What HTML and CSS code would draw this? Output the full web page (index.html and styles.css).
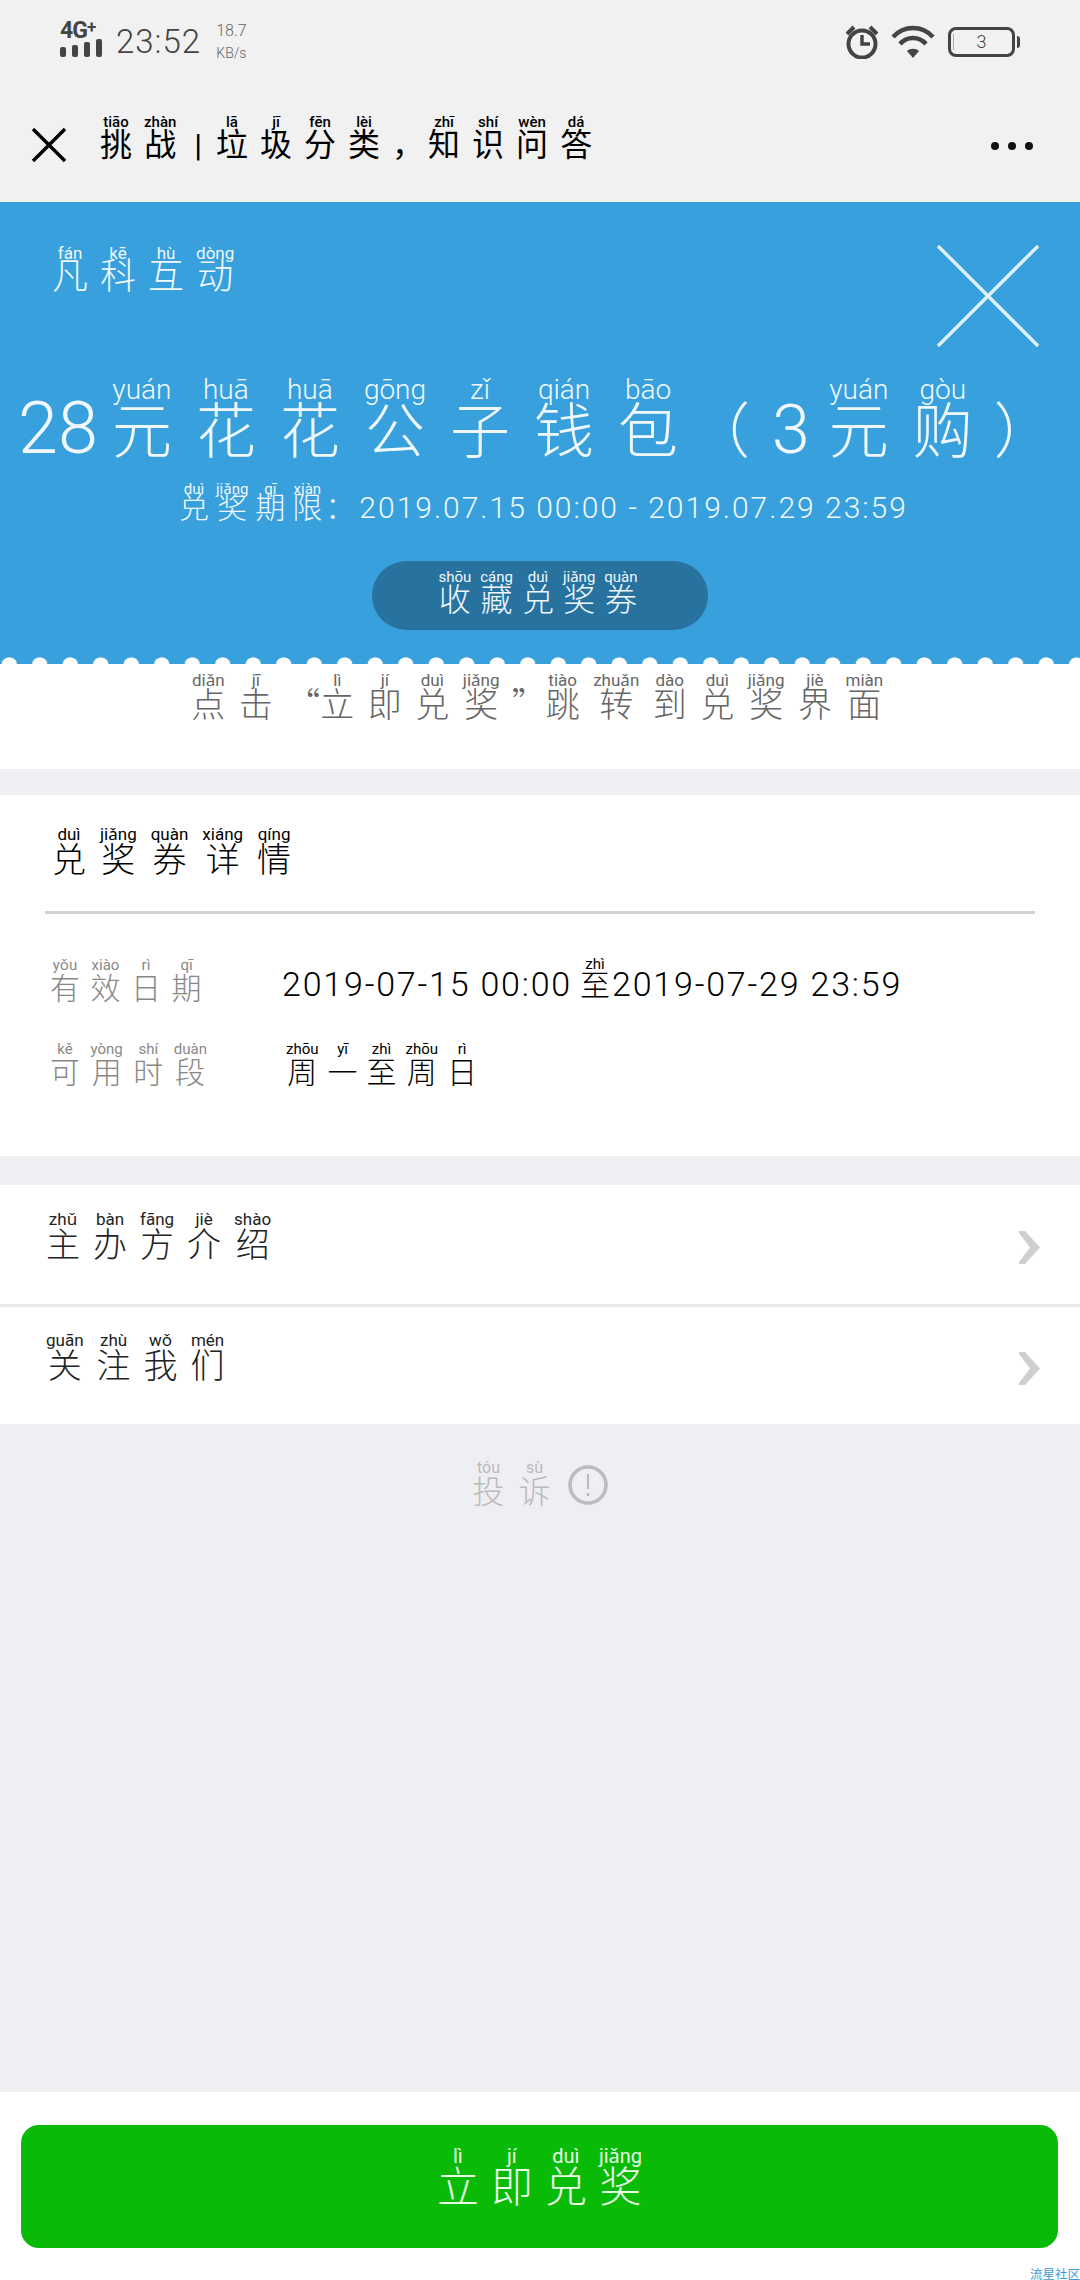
FILE: index.html
```html
<!DOCTYPE html>
<html lang="zh-CN">
<head>
<meta charset="utf-8">
<title>兑奖券</title>
<link rel="stylesheet" href="styles.css">
</head>
<body>
<div class="page">
  <header class="top">
    <div class="status">
      <div class="status-left">
        <div class="net"><span class="net-label">4G<sup>+</sup></span>
          <svg class="signal" width="42" height="18" viewBox="0 0 42 18"><rect x="0" y="8" width="6" height="10" rx="2"/><rect x="12" y="6" width="6" height="12" rx="2"/><rect x="24" y="3" width="6" height="15" rx="2"/><rect x="36" y="0" width="6" height="18" rx="2"/></svg>
        </div>
        <span class="time">23:52</span>
        <div class="speed"><span>18.7</span><span class="speed-unit">KB/s</span></div>
      </div>
      <div class="status-right">
        <svg class="alarm" width="34" height="34" viewBox="0 0 34 34" fill="none" stroke="#444"><circle cx="17" cy="19" r="13.5" stroke-width="4"/><path d="M17 10v9h8" stroke-width="3.5"/><path d="M2 9 9 2M32 9 25 2" stroke-width="4"/></svg>
        <svg class="wifi" width="44" height="33" viewBox="0 0 44 33" fill="none" stroke="#444" stroke-width="4.5"><path d="M2 12C13 0 31 0 42 12"/><path d="M9 19C16 11 28 11 35 19"/><path d="M16 26 22 33 28 26C25 23 19 23 16 26Z" fill="#444" stroke="none"/></svg>
        <div class="battery"><span class="battery-low"></span><span class="battery-num">3</span></div>
        <span class="battery-nub"></span>
      </div>
    </div>
    <nav class="nav">
      <svg class="nav-close" width="36" height="36" viewBox="0 0 36 36" stroke="#000" stroke-width="3.4" fill="none"><path d="M2 2 34 34M34 2 2 34"/></svg>
      <div class="nav-title zh"><ruby>挑<rt>tiāo</rt></ruby><ruby>战<rt>zhàn</rt></ruby><span class="bar">|</span><ruby>垃<rt>lā</rt></ruby><ruby>圾<rt>jī</rt></ruby><ruby>分<rt>fēn</rt></ruby><ruby>类<rt>lèi</rt></ruby><span class="comma">，</span><ruby>知<rt>zhī</rt></ruby><ruby>识<rt>shí</rt></ruby><ruby>问<rt>wèn</rt></ruby><ruby>答<rt>dá</rt></ruby></div>
      <div class="nav-more"><i></i><i></i><i></i></div>
    </nav>
  </header>

  <section class="hero">
    <div class="hero-top">
      <div class="brand zh"><ruby>凡<rt>fán</rt></ruby><ruby>科<rt>kē</rt></ruby><ruby>互<rt>hù</rt></ruby><ruby>动<rt>dòng</rt></ruby></div>
      <svg class="hero-close" width="102" height="102" viewBox="0 0 102 102" stroke="#dff0fa" stroke-width="3.4" fill="none"><path d="M1 1 101 101M101 1 1 101"/></svg>
    </div>
    <h1 class="hero-title zh"><span class="num">28</span><ruby>元<rt>yuán</rt></ruby><ruby>花<rt>huā</rt></ruby><ruby>花<rt>huā</rt></ruby><ruby>公<rt>gōng</rt></ruby><ruby>子<rt>zǐ</rt></ruby><ruby>钱<rt>qián</rt></ruby><ruby>包<rt>bāo</rt></ruby><span class="paren">（</span><span class="num num-3">3</span><ruby>元<rt>yuán</rt></ruby><ruby>购<rt>gòu</rt></ruby><span class="paren paren-close">）</span></h1>
    <p class="hero-date zh"><ruby>兑<rt>duì</rt></ruby><ruby>奖<rt>jiǎng</rt></ruby><ruby>期<rt>qī</rt></ruby><ruby>限<rt>xiàn</rt></ruby><span class="colon">：</span><span class="num">2019.07.15 00:00 - 2019.07.29 23:59</span></p>
    <div class="hero-action"><button class="collect zh" type="button"><ruby>收<rt>shōu</rt></ruby><ruby>藏<rt>cáng</rt></ruby><ruby>兑<rt>duì</rt></ruby><ruby>奖<rt>jiǎng</rt></ruby><ruby>券<rt>quàn</rt></ruby></button></div>
    <div class="scallop"></div>
  </section>

  <section class="notice zh"><ruby>点<rt>diǎn</rt></ruby><ruby>击<rt>jī</rt></ruby><span class="quote">“</span><ruby>立<rt>lì</rt></ruby><ruby>即<rt>jí</rt></ruby><ruby>兑<rt>duì</rt></ruby><ruby>奖<rt>jiǎng</rt></ruby><span class="quote">”</span><ruby>跳<rt>tiào</rt></ruby><ruby>转<rt>zhuǎn</rt></ruby><ruby>到<rt>dào</rt></ruby><ruby>兑<rt>duì</rt></ruby><ruby>奖<rt>jiǎng</rt></ruby><ruby>界<rt>jiè</rt></ruby><ruby>面<rt>miàn</rt></ruby></section>

  <section class="details">
    <h2 class="details-title zh"><ruby>兑<rt>duì</rt></ruby><ruby>奖<rt>jiǎng</rt></ruby><ruby>券<rt>quàn</rt></ruby><ruby>详<rt>xiáng</rt></ruby><ruby>情<rt>qíng</rt></ruby></h2>
    <div class="details-rows">
      <div class="row row-date zh">
        <div class="row-label"><ruby>有<rt>yǒu</rt></ruby><ruby>效<rt>xiào</rt></ruby><ruby>日<rt>rì</rt></ruby><ruby>期<rt>qī</rt></ruby></div>
        <div class="row-value date-value"><span class="num">2019-07-15 00:00</span><ruby>至<rt>zhì</rt></ruby><span class="num">2019-07-29 23:59</span></div>
      </div>
      <div class="row row-time zh">
        <div class="row-label"><ruby>可<rt>kě</rt></ruby><ruby>用<rt>yòng</rt></ruby><ruby>时<rt>shí</rt></ruby><ruby>段<rt>duàn</rt></ruby></div>
        <div class="row-value week-value"><ruby>周<rt>zhōu</rt></ruby><ruby>一<rt>yī</rt></ruby><ruby>至<rt>zhì</rt></ruby><ruby>周<rt>zhōu</rt></ruby><ruby>日<rt>rì</rt></ruby></div>
      </div>
    </div>
  </section>

  <section class="links">
    <a class="link zh"><span class="link-text"><ruby>主<rt>zhǔ</rt></ruby><ruby>办<rt>bàn</rt></ruby><ruby>方<rt>fāng</rt></ruby><ruby>介<rt>jiè</rt></ruby><ruby>绍<rt>shào</rt></ruby></span>
      <svg class="chev" width="21" height="33" viewBox="0 0 21 33" fill="#cfcfcf"><path d="M0 0 6 0 21 16.500 6 33 0 33 0 31 11 16.500 0 2Z"/></svg></a>
    <a class="link zh"><span class="link-text"><ruby>关<rt>guān</rt></ruby><ruby>注<rt>zhù</rt></ruby><ruby>我<rt>wǒ</rt></ruby><ruby>们<rt>mén</rt></ruby></span>
      <svg class="chev" width="21" height="33" viewBox="0 0 21 33" fill="#cfcfcf"><path d="M0 0 6 0 21 16.500 6 33 0 33 0 31 11 16.500 0 2Z"/></svg></a>
  </section>

  <section class="complain zh"><span class="complain-text"><ruby>投<rt>tóu</rt></ruby><ruby>诉<rt>sù</rt></ruby></span>
    <svg class="warn" width="40" height="40" viewBox="0 0 40 40" fill="none" stroke="#bcbcc0"><circle cx="20" cy="20" r="18" stroke-width="3.500"/><path d="M20 9v15" stroke-width="2.200"/><path d="M20 28v3" stroke-width="2.600"/></svg>
  </section>

  <div class="spacer"></div>

  <footer class="footer">
    <button class="redeem zh" type="button"><ruby>立<rt>lì</rt></ruby><ruby>即<rt>jí</rt></ruby><ruby>兑<rt>duì</rt></ruby><ruby>奖<rt>jiǎng</rt></ruby></button>
    <span class="watermark">流星社区</span>
  </footer>
</div>
</body>
</html>
```
FILE: styles.css
```css
* { box-sizing: border-box; }
html, body { margin: 0; padding: 0; }
body { background: #eeeef3; }
.page { width: 1080px; height: 2280px; display: flex; flex-direction: column; overflow: hidden; font-family: "Noto Sans CJK SC", "Roboto", sans-serif; }

.zh { font-family: "Noto Sans CJK SC", sans-serif; font-weight: 300; }
.zh ruby { ruby-position: over; }
.zh rt { font-family: "Roboto", "Noto Sans", sans-serif; font-weight: 400; line-height: 1; position: relative; top: var(--rt-shift, 0); }
.num { font-family: "Roboto", sans-serif; font-weight: 300; }

/* top */
.top { height: 202px; background: #f1f1f1; display: flex; flex-direction: column; }
.status { height: 84px; display: flex; justify-content: space-between; padding: 22px 60px 0 60px; }
.status-left { display: flex; align-items: flex-start; }
.net { width: 44px; display: flex; flex-direction: column; align-items: flex-start; }
.net-label { font: 700 23px/17px "Roboto", sans-serif; color: #444; letter-spacing: -1px; }
.net-label sup { font-size: 17px; line-height: 0; vertical-align: 5px; }
.signal { fill: #444; }
.time { margin: 2px 0 0 12px; font: 300 33px/36px "Roboto", sans-serif; color: #444; letter-spacing: 1px; }
.speed { margin: -1px 0 0 15px; display: flex; flex-direction: column; align-items: center; font: 300 16px/20px "Roboto", sans-serif; color: #666; }
.speed-unit { font-size: 14px; margin-top: 2px; }
.status-right { display: flex; align-items: flex-start; margin-top: 3px; }
.alarm { margin-right: 12px; }
.wifi { margin-right: 13px; }
.battery { width: 67px; height: 30px; border: 3.5px solid #444; border-radius: 8px; margin-top: 2px; display: flex; align-items: center; justify-content: center; position: relative; }
.battery-low { position: absolute; left: 2px; top: 4px; bottom: 4px; width: 1px; background: #d99; }
.battery-num { font: 300 18px/1 "Roboto", sans-serif; color: #444; }
.battery-nub { width: 3px; height: 12px; margin: 11px 0 0 2px; background: #444; border-radius: 0 3px 3px 0; }

.nav { flex: 1; display: flex; align-items: center; padding: 0 47px 0 31px; }
.nav-close { margin-top: 4px; flex: none; }
.nav-title { flex: 1; margin-left: 33px; padding-bottom: 14px; font-size: 32px; line-height: 34px; color: #000; font-weight: 400; white-space: nowrap; --rt-shift: 4px; }
.nav-title ruby { margin-right: 12px; }
.nav-title rt { font-size: 15px; font-weight: 500; }
.bar { margin: 0 14px 0 6px; font-family: "Roboto", sans-serif; }
.comma { margin-right: 4px; }
.nav-more { display: flex; gap: 9px; margin-top: 6px; }
.nav-more i { width: 8px; height: 8px; border-radius: 50%; background: #111; }

/* hero */
.hero { height: 462px; background: #38a0dc; color: #f0f8fd; display: flex; flex-direction: column; }
.hero-top { height: 140px; display: flex; justify-content: space-between; padding: 43px 41px 0 52px; position: relative; }
.brand { font-size: 36px; line-height: 40px; margin: -5px 0 0 0; white-space: nowrap; --rt-shift: 6px; }
.brand ruby { margin-right: 12px; }
.brand rt { font-size: 17px; }
.hero-title { margin: 29px 0 0; padding-left: 18px; font-size: 60px; line-height: 66px; font-weight: 300; white-space: nowrap; --rt-shift: 6px; }
.hero-title ruby { margin-right: 24px; }
.hero-title rt { font-size: 28px; font-weight: 300; }
.hero-title .num { font-size: 72px; margin-right: 14px; }
.hero-title .num-3 { margin-right: 19px; font-size: 68px; }
.paren { margin-right: 22px; margin-left: -12px; }
.paren-close { margin: 0 0 0 -3px; }
.hero-date { margin: 12px 0 0 179px; font-size: 30px; line-height: 34px; white-space: nowrap; --rt-shift: 7px; }
.hero-date ruby { margin-right: 7px; }
.hero-date rt { font-size: 15px; }
.colon { margin-right: 4px; margin-left: -4px; }
.hero-date .num { font-size: 30px; letter-spacing: 2px; }
.hero-action { display: flex; justify-content: center; margin-top: 36px; }
.collect { width: 336px; height: 69px; padding: 0 0 12px 5px; border: 0; border-radius: 35px; background: #27729f; color: #f0f8fd; font-size: 32px; line-height: 34px; white-space: nowrap; --rt-shift: 4px; }
.collect ruby { margin-right: 9px; }
.collect rt { font-size: 15px; }
.scallop { height: 7px; margin-top: auto; background: radial-gradient(ellipse 8px 7px at 50% 100%, #fff 88%, transparent 100%) -6px 0 / 30.500px 7px repeat-x; }

/* notice */
.notice { height: 105px; background: #fff; color: #666; font-size: 34px; line-height: 38px; text-align: center; padding: 20px 0 0 8px; white-space: nowrap; --rt-shift: 3px; }
.notice ruby { margin-right: 13.500px; }
.notice rt { font-size: 17px; }

/* details */
.details { height: 361px; margin-top: 26px; background: #fff; padding: 29px 45px 0; }
.details-title { margin: 0; padding: 0 0 0 7px; height: 90px; border-bottom: 3px solid #d2d2d2; font-size: 34px; line-height: 38px; color: #000; font-weight: 300; white-space: nowrap; --rt-shift: 2px; }
.details-title ruby { margin-right: 14px; }
.details-title rt { font-size: 17px; }
.details-rows { padding: 42px 0 0 5px; }
.row { display: flex; font-size: 30px; line-height: 34px; white-space: nowrap; --rt-shift: 2px; }
.row rt { font-size: 15px; }
.row-time { margin-top: 37px; }
.row-label { width: 232px; color: #888; }
.row-label ruby { margin-right: 10.500px; }
.row-value { color: #000; }
.week-value { padding-left: 4px; }
.week-value ruby { margin-right: 9px; }
.date-value { margin-top: -3px; --rt-shift: 4px; }
.date-value ruby { margin: 0 2px 0 8px; }
.date-value .num { font-size: 34px; letter-spacing: 1.800px; }

/* links */
.links { margin-top: 29px; background: #fff; }
.link { height: 119px; display: flex; align-items: center; justify-content: space-between; padding: 0 40px 0 46px; --rt-shift: 2px; }
.link + .link { height: 120px; border-top: 3px solid #e8e8ea; }
.link-text { color: #222; font-size: 34px; line-height: 38px; white-space: nowrap; padding-bottom: 18px; }
.link-text ruby { margin-right: 13px; }
.link-text rt { font-size: 17px; }
.chev { margin-top: 5px; }

/* complain */
.complain { display: flex; justify-content: center; align-items: center; height: 110px; color: #bbb; font-size: 32px; line-height: 36px; padding-top: 6px; --rt-shift: 3px; }
.complain-text ruby { margin-right: 14px; }
.complain-text rt { font-size: 16px; }
.warn { margin: 6px 0 0 3px; }

.spacer { flex: 1; }

/* footer */
.footer { height: 188px; background: #fff; padding: 33px 22px 0 21px; position: relative; }
.redeem { display: block; width: 100%; height: 123px; border: 0; border-radius: 18px; background: #09bb07; color: #eafbe9; font-size: 42px; line-height: 46px; padding: 0 0 22px 12px; white-space: nowrap; --rt-shift: 3px; }
.redeem ruby { margin-right: 12px; }
.redeem rt { font-size: 20px; }
.watermark { position: absolute; right: 0; bottom: 0; font: 400 12.500px/13px "Noto Sans CJK SC", sans-serif; color: #3a9ad9; }
```
